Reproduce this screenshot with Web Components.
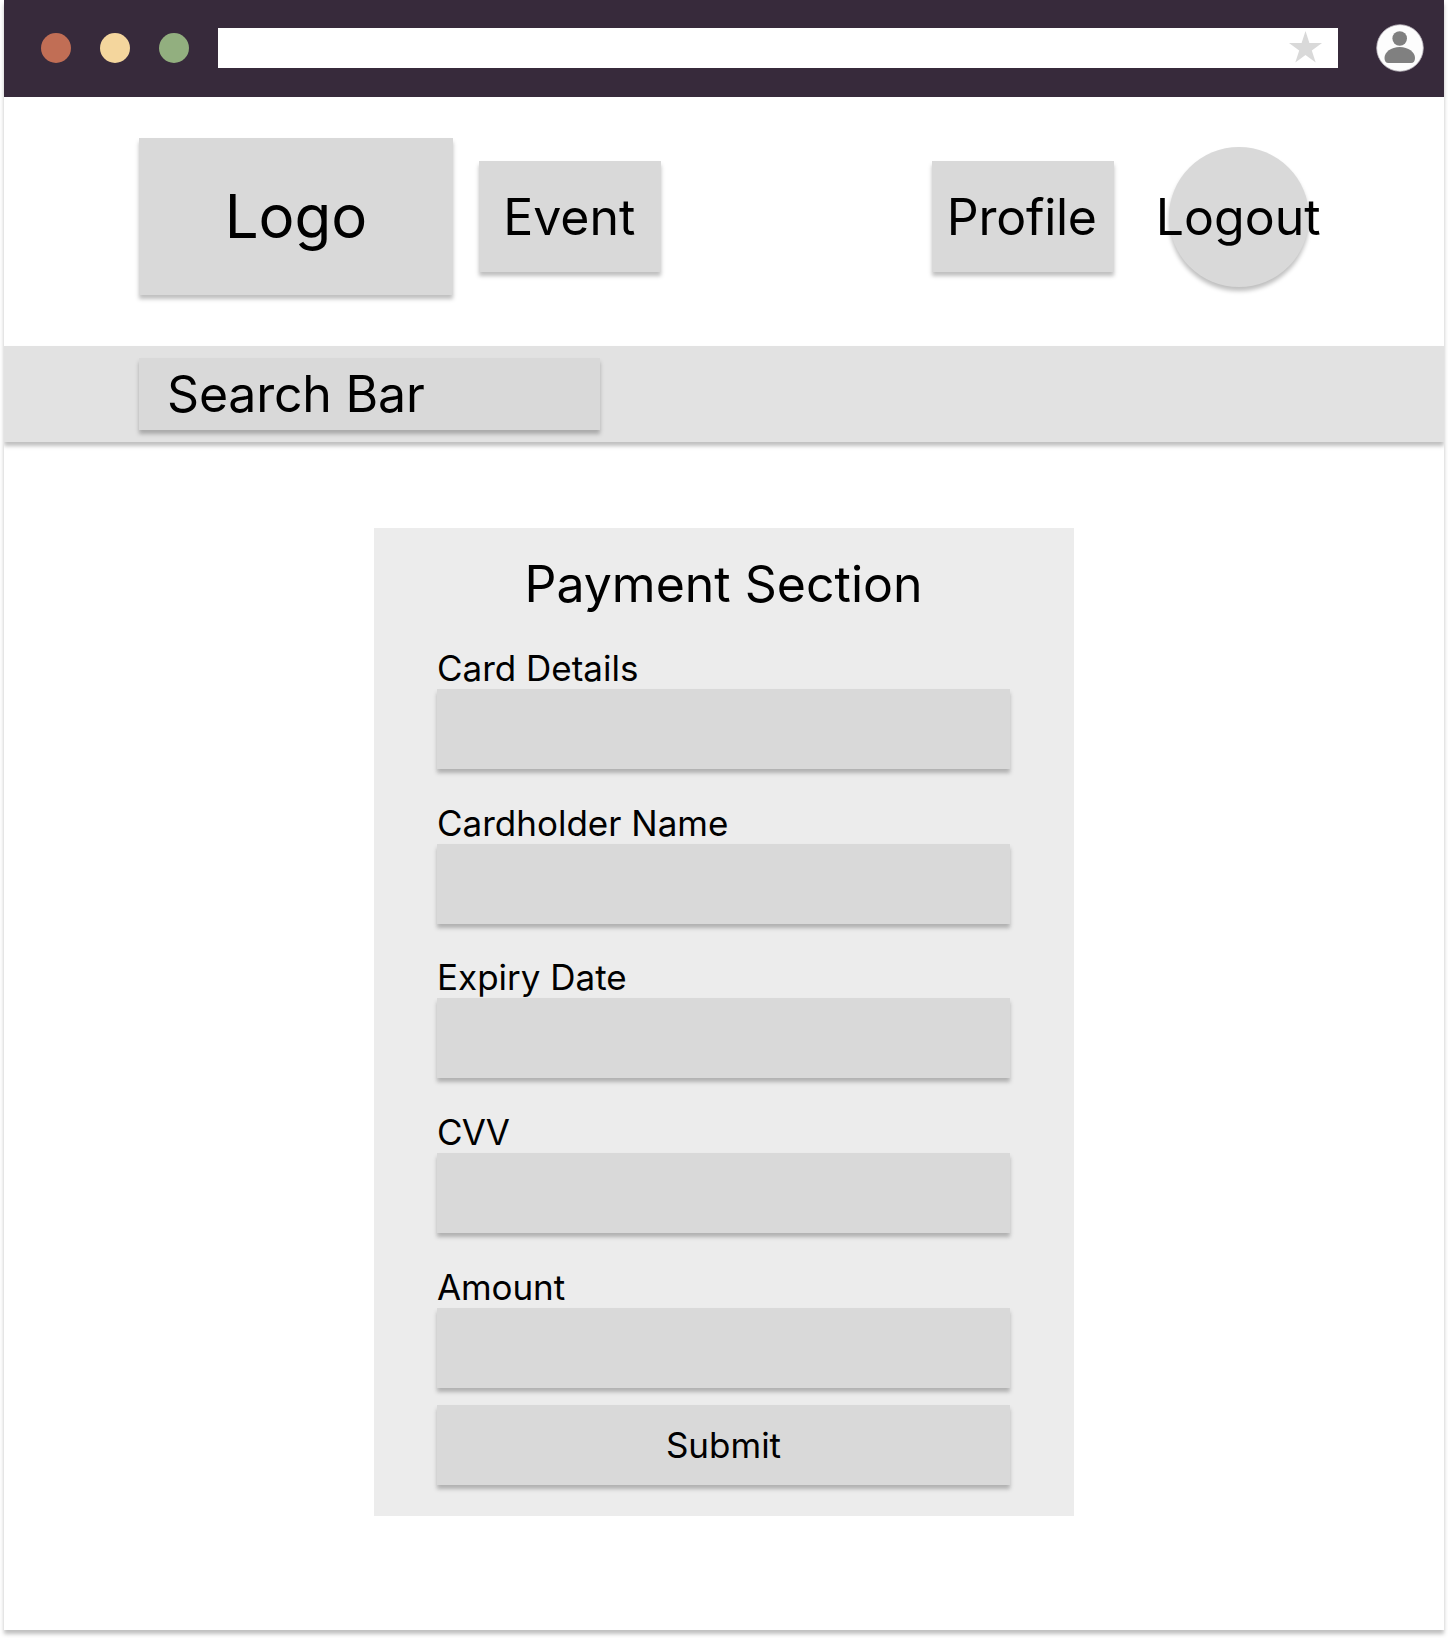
<!DOCTYPE html>
<html lang="en">
<head>
<meta charset="utf-8">
<title>Payment</title>
<style>
html,body{margin:0;background:#fff}
body{font-family:Inter,"Liberation Sans",sans-serif;color:#000;height:1638px;overflow:hidden}
</style>
</head>
<body>
<browser-frame>
  <browser-bar></browser-bar>
  <site-header></site-header>
  <search-band>Search Bar</search-band>
  <payment-panel heading="Payment Section">
    <form-field label="Card Details"></form-field>
    <form-field label="Cardholder Name"></form-field>
    <form-field label="Expiry Date"></form-field>
    <form-field label="CVV" style="letter-spacing:-.8px"></form-field>
    <form-field label="Amount" style="letter-spacing:-.1px"></form-field>
    <wire-box slot="action" style="--w:573px;--h:80px;--fs:35px">Submit</wire-box>
  </payment-panel>
</browser-frame>
<script>
const define = (name, html, setup) => customElements.define(name, class extends HTMLElement {
  constructor() {
    super();
    this.attachShadow({ mode: 'open' }).innerHTML = html;
  }
  connectedCallback() { if (setup) setup(this, this.shadowRoot); }
});

define('wire-box', `
<style>
:host{display:flex;flex:none;align-items:center;justify-content:center;box-sizing:border-box;
width:var(--w);height:var(--h);border-radius:var(--r,0);background:#d9d9d9;
box-shadow:0 4px 4px rgba(0,0,0,.25);font-size:var(--fs,50px);line-height:1.2;white-space:nowrap}
</style><slot></slot>`);

define('browser-frame', `
<style>
:host{display:flex;flex-direction:column;width:1440px;height:1630px;margin:0 4px;background:#fff;
overflow:hidden;box-shadow:0 4px 4px rgba(0,0,0,.25)}
</style><slot></slot>`);

define('browser-bar', `
<style>
:host{display:flex;align-items:center;box-sizing:border-box;height:97px;flex:none;background:#372a3b;padding:0 20px 1px 37px}
.dots{display:flex;gap:29px}
i{width:30px;height:30px;border-radius:50%}
.url{display:flex;align-items:center;justify-content:flex-end;box-sizing:border-box;width:1120px;height:40px;margin-left:29px;padding-right:15px;background:#fff}
svg{display:block}
.avatar{margin-left:38px;margin-bottom:1px;filter:blur(.6px)}
</style>
<div class="dots"><i style="background:#c16e55"></i><i style="background:#f4d69d"></i><i style="background:#92af7f"></i></div>
<div class="url"><svg width="35" height="34" viewBox="0 0 35 34"><path fill="#d9d9d9" d="M17.5 0l3.9 12h12.6l-10.2 7.4 3.9 12-10.2-7.4-10.2 7.4 3.9-12L1 12h12.6z"/></svg></div>
<svg class="avatar" width="48" height="48" viewBox="0 0 48 48"><circle cx="24" cy="24" r="23.3" fill="#fdfdfd" stroke="#b9b4bb" stroke-width=".8"/><circle cx="23.7" cy="14.5" r="7.3" fill="#808080"/><path fill="#808080" d="M8.5 34C8.5 28 15 23 23.7 23S39 28 39 34q0 5-4 5H12.5q-4 0-4-5z"/></svg>`);

define('site-header', `
<style>
:host{display:flex;align-items:center;flex:none;box-sizing:border-box;height:249px;padding:0 135px 10px 135px}
.left,.right{display:flex;align-items:center}
.left{gap:26px}.right{gap:55px;margin-left:auto}
.logo{--w:314px;--h:157px;--fs:60px;padding-bottom:2px}
.nav{--w:182px;--h:111px;padding-top:1px}
.event{padding-right:1.5px}
.profile{letter-spacing:-.25px;padding-right:2.5px}
.logout{--w:140px;--h:140px;--r:50%;margin-top:1px;padding-right:1.5px}
</style>
<div class="left"><wire-box class="logo">Logo</wire-box><wire-box class="nav event">Event</wire-box></div>
<div class="right"><wire-box class="nav profile">Profile</wire-box><wire-box class="logout">Logout</wire-box></div>`);

define('search-band', `
<style>
:host{display:flex;align-items:center;flex:none;height:96px;padding-left:135px;background:#e2e2e2;box-shadow:0 4px 4px rgba(0,0,0,.25)}
wire-box{--w:461px;--h:72px;justify-content:flex-start;padding-left:28px;letter-spacing:-.2px}
</style><wire-box><slot></slot></wire-box>`);

define('payment-panel', `
<style>
:host{display:flex;flex-direction:column;box-sizing:border-box;width:700px;height:988px;margin:86px 0 0 370px;padding:26px 64px 31px 63px;background:#ececec}
h1{margin:0 0 32px;font-weight:400;font-size:50px;line-height:60px;text-align:center}
.fields{display:flex;flex-direction:column;gap:31.7px}
.action{margin-top:17px}
</style><h1></h1><div class="fields"><slot></slot></div><div class="action"><slot name="action"></slot></div>`,
(el, root) => { root.querySelector('h1').textContent = el.getAttribute('heading'); });

define('form-field', `
<style>
:host{display:flex;flex-direction:column}
label{padding-top:2px;font-size:35px;line-height:41px;white-space:nowrap}
</style><label></label><wire-box style="--w:573px;--h:80px"></wire-box>`,
(el, root) => { root.querySelector('label').textContent = el.getAttribute('label'); });
</script>
</body>
</html>
